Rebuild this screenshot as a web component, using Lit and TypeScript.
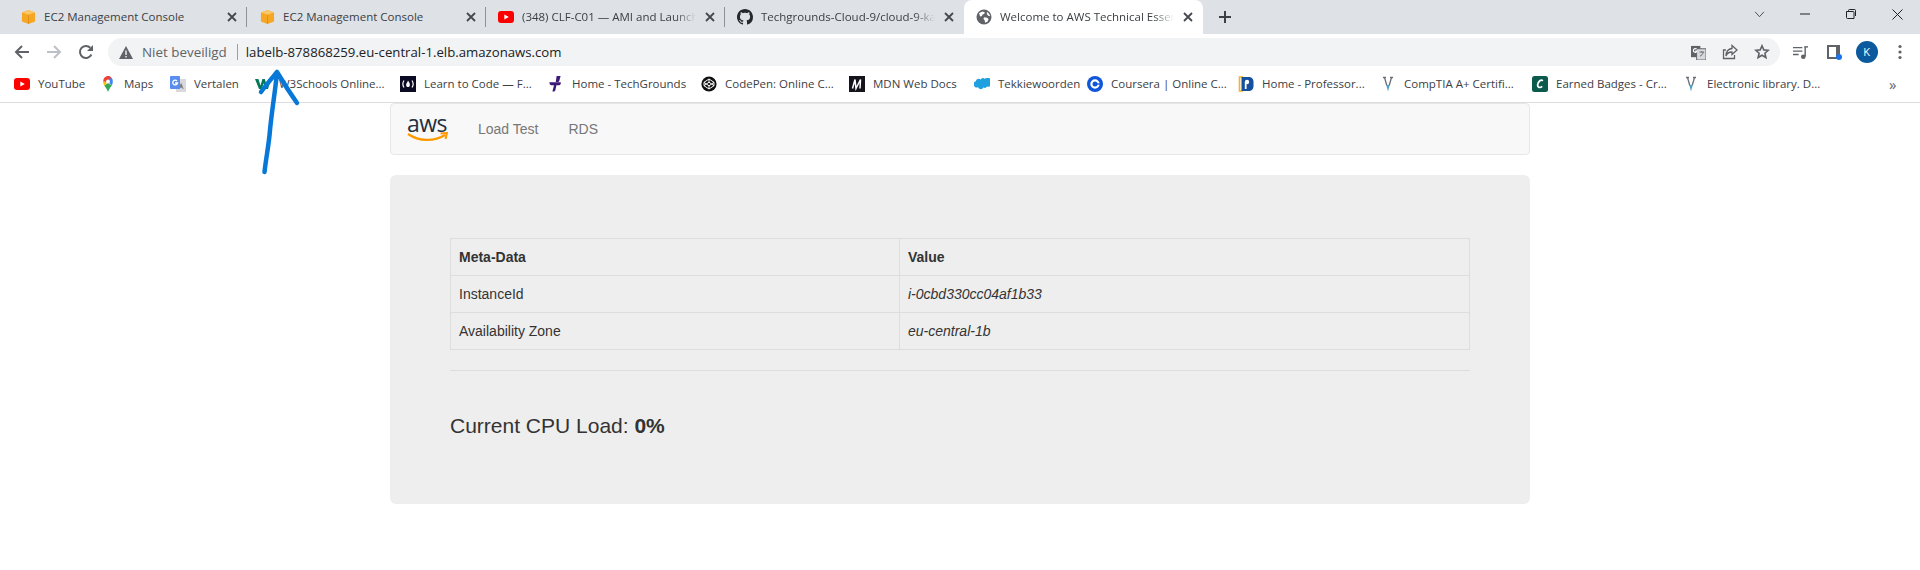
import {LitElement, html, css, svg} from 'lit';
import {customElement} from 'lit/decorators.js';

const cube = svg`<svg viewBox="0 0 16 16" width="15" height="16"><path fill="#f5a623" d="M8 .5 15 3.2v9.6L8 15.5 1 12.8V3.2z"/><path fill="#fbc766" d="M8 .5 15 3.2 8 5.6 1 3.2z"/><path fill="#d98a12" d="M7.6 5.6h.8v9.9h-.8z"/></svg>`;
const yt = svg`<svg viewBox="0 0 16 12" width="16" height="12"><rect width="16" height="12" rx="3" fill="#f00"/><path fill="#fff" d="M6.3 3.4v5.2L10.8 6z"/></svg>`;
const github = svg`<svg viewBox="0 0 16 16" width="16" height="16"><path fill="#24292f" d="M8 0C3.58 0 0 3.58 0 8c0 3.54 2.29 6.53 5.47 7.59.4.07.55-.17.55-.38 0-.19-.01-.82-.01-1.49-2.01.37-2.53-.49-2.69-.94-.09-.23-.48-.94-.82-1.13-.28-.15-.68-.52-.01-.53.63-.01 1.08.58 1.23.82.72 1.21 1.87.87 2.33.66.07-.52.28-.87.51-1.07-1.78-.2-3.64-.89-3.64-3.95 0-.87.31-1.59.82-2.15-.08-.2-.36-1.02.08-2.12 0 0 .67-.21 2.2.82.64-.18 1.32-.27 2-.27.68 0 1.36.09 2 .27 1.53-1.04 2.2-.82 2.2-.82.44 1.1.16 1.92.08 2.12.51.56.82 1.27.82 2.15 0 3.07-1.87 3.75-3.65 3.95.29.25.54.73.54 1.48 0 1.07-.01 1.93-.01 2.2 0 .21.15.46.55.38A8.013 8.013 0 0016 8c0-4.42-3.58-8-8-8z"/></svg>`;
const globe = svg`<svg viewBox="0 0 16 16" width="16" height="16"><circle cx="8" cy="8" r="7.5" fill="#5f6368"/><path fill="#fff" d="M3 4.2 6.2 2.4l2.6.8-.6 1.8-1.8.4-.4 1.6L4.2 7.4zM8.2 8.2l3 .6 1.4 1.4-1.2 2.6-2.2 1-.6-2.6-1.2-1.4zM11 2.8l2.4 2.4.8 2-2-.4-1.4-1.8z"/></svg>`;

const close = svg`<svg viewBox="0 0 10 10" width="10" height="10"><path stroke="#45484d" stroke-width="1.8" fill="none" d="M1 1l8 8M9 1l-8 8"/></svg>`;

const bookmarkIcons: Record<string, unknown> = {
  yt,
  maps: svg`<svg viewBox="0 0 16 16" width="16" height="16"><path fill="#34a853" d="M8 16C7 13 5.4 11.4 4.2 9.6L8 7l3.8 2.6C10.6 11.4 9 13 8 16z"/><path fill="#fbbc04" d="M3.2 5.4c0 1.6.4 2.6 1 4.2L8 6z"/><path fill="#4285f4" d="M8 0a4.9 4.9 0 0 1 4.8 5.4c0 1.6-.4 2.6-1 4.2L8 6z"/><path fill="#ea4335" d="M8 0C5.4 0 3.2 2.4 3.2 5.4L8 6l3-4.6C10.2.6 9.2 0 8 0z"/><circle cx="8" cy="5.4" r="1.9" fill="#fff"/></svg>`,
  translate: svg`<svg viewBox="0 0 16 16" width="16" height="16"><rect x="6" y="3" width="10" height="13" fill="#d9d9dd"/><path fill="#7b7f86" d="M10.6 7.5h1l2 5.5h-1l-.4-1.2h-2l-.4 1.2h-1z"/><rect width="10" height="13" rx="1" fill="#5a8df0"/><path fill="none" stroke="#fff" stroke-width="1.3" d="M7 5a2.4 2.4 0 1 0 .5 2H5"/></svg>`,
  w3: svg`<svg viewBox="0 0 16 16" width="16" height="16"><path fill="#04795a" d="M0 3h3.4L5.5 9.6 7.4 3h2.4l2 6.6L13.6 3H16l-3 10h-2.6L8.6 7.2 6.8 13H4z"/></svg>`,
  fcc: svg`<svg viewBox="0 0 16 16" width="16" height="16"><rect width="16" height="16" fill="#0a0a23"/><path fill="none" stroke="#fff" stroke-width="1.2" d="M4 4.5C2.6 6.6 2.6 9.4 4 11.5M12 4.5c1.4 2.1 1.4 4.9 0 7"/><path fill="#fff" d="M8 4.6c1 1.6 2.2 2.8 1.8 4.8-.2 1-1 1.6-1.8 1.6s-1.6-.6-1.8-1.6C5.8 7.6 7.4 6.8 8 4.6z"/></svg>`,
  tg: svg`<svg viewBox="0 0 16 16" width="16" height="16"><path fill="#3c1a78" d="M8.6 0h4l-1.2 4.4c-.3 1-1 1.6-2 1.6H7.8zM1.4 6.2h10.4c1 0 1.2.4 1 1.2-.3 1-1 1.8-2.2 1.8H8.4L7.4 14c-.2.9-1 1.6-2.2 1.6H4.4L6 9.2H3.4c-1.2 0-2-.9-2-3z"/></svg>`,
  codepen: svg`<svg viewBox="0 0 16 16" width="16" height="16"><circle cx="8" cy="8" r="7.6" fill="#111"/><path fill="none" stroke="#fff" stroke-width="1" d="M8 3 13 6.3v3.4L8 13 3 9.7V6.3zM8 3v3.2M8 13V9.8M3 6.3 8 9.8l5-3.5M3 9.7 8 6.2l5 3.5"/></svg>`,
  mdn: svg`<svg viewBox="0 0 16 16" width="16" height="16"><rect width="16" height="16" fill="#15141a"/><path fill="none" stroke="#fff" stroke-width="1.5" d="M3.500 12.500 6 3.500l1 9 4.500-9-.5 9"/></svg>`,
  sf: svg`<svg viewBox="0 0 16 12" width="16" height="12"><path fill="#1ea1de" d="M6.6 1.4A3 3 0 0 1 11 1a2.8 2.8 0 0 1 5 2.6 3 3 0 0 1-3 5 2.6 2.6 0 0 1-3.600 1 3 3 0 0 1-5.400-.3A2.600 2.600 0 0 1 1.800 3.200a3 3 0 0 1 4.800-1.800z"/></svg>`,
  coursera: svg`<svg viewBox="0 0 16 16" width="16" height="16"><circle cx="8" cy="8" r="8" fill="#0f56d9"/><circle cx="8" cy="8" r="3.600" fill="none" stroke="#fff" stroke-width="2.200"/><path fill="#0f56d9" d="M9.500 7.300h3.500v1.400H9.500z"/></svg>`,
  prof: svg`<svg viewBox="0 0 16 16" width="16" height="16"><path fill="none" stroke="#f4b22e" stroke-width="1.600" d="M5 1H1.500v14H5"/><path fill="#14509e" d="M3.500 1H11a4.500 4.500 0 0 1 4.500 4.500v5A4.500 4.500 0 0 1 11 15H3.500z"/><circle cx="9" cy="6" r="2.200" fill="#fff"/><rect x="6.800" y="6" width="1.800" height="7" fill="#fff"/></svg>`,
  v: svg`<svg viewBox="0 0 16 16" width="16" height="16"><path fill="none" stroke="#6b6f75" stroke-width="1.300" d="M3 1.500h3M10 1.500h3M4.500 1.500l2.300 8M11.500 1.500l-2.300 8"/><path fill="#4aa3c7" d="M6.300 9h3.400L8 15.500z"/></svg>`,
  credly: svg`<svg viewBox="0 0 16 16" width="16" height="16"><rect width="16" height="16" rx="2.500" fill="#0c5a4c"/><path fill="none" stroke="#fff" stroke-width="1.800" d="M10.800 4.800C9 3 5.800 5.600 5.600 9c-.1 2.600 2.400 3.200 4.600 1.400"/></svg>`,
};

const tabs = [
  {icon: cube, title: 'EC2 Management Console'},
  {icon: cube, title: 'EC2 Management Console'},
  {icon: yt, title: '(348) CLF-C01 — AMI and Launch', fade: true},
  {icon: github, title: 'Techgrounds-Cloud-9/cloud-9-ka', fade: true},
  {icon: globe, title: 'Welcome to AWS Technical Essen', fade: true, active: true},
];

// x of each bookmark, the width of an item is the distance to the next one
const bookmarks = [
  {x: 14, icon: 'yt', label: 'YouTube'},
  {x: 100, icon: 'maps', label: 'Maps'},
  {x: 170, icon: 'translate', label: 'Vertalen'},
  {x: 255, icon: 'w3', label: 'W3Schools Online...'},
  {x: 400, icon: 'fcc', label: 'Learn to Code — F...'},
  {x: 548, icon: 'tg', label: 'Home - TechGrounds'},
  {x: 701, icon: 'codepen', label: 'CodePen: Online C...'},
  {x: 849, icon: 'mdn', label: 'MDN Web Docs'},
  {x: 974, icon: 'sf', label: 'Tekkiewoorden'},
  {x: 1087, icon: 'coursera', label: 'Coursera | Online C...'},
  {x: 1238, icon: 'prof', label: 'Home - Professor...'},
  {x: 1380, icon: 'v', label: 'CompTIA A+ Certifi...'},
  {x: 1532, icon: 'credly', label: 'Earned Badges - Cr...'},
  {x: 1683, icon: 'v', label: 'Electronic library. D...'},
  {x: 1890, icon: '', label: ''},
];

@customElement('app-root')
export class AppRoot extends LitElement {
  static styles = css`
    :host {
      display: block;
      position: relative;
      width: 1920px;
      height: 570px;
      overflow: hidden;
      background: #fff;
      color: #333;
      font-family: 'Liberation Sans', Arial, sans-serif;
      font-size: 14px;
      line-height: 20px;
    }
    .chrome {
      font-family: 'Open Sans', sans-serif;
      color: #3c4043;
      font-size: 11.5px;
    }
    .tabstrip {
      display: flex;
      height: 34px;
      padding-left: 8px;
      background: #dee1e6;
    }
    .tab {
      position: relative;
      display: flex;
      align-items: center;
      flex: none;
      box-sizing: border-box;
      width: 239px;
      padding: 0 7px 0 12px;
    }
    .tab::after {
      content: '';
      position: absolute;
      right: 0;
      top: 7px;
      height: 20px;
      width: 1px;
      background: #8e9297;
    }
    .tab.active {
      background: #fff;
      border-radius: 8px 8px 0 0;
    }
    .tab.active::after {
      display: none;
    }
    .tab.before-active::after {
      display: none;
    }
    .fav {
      display: flex;
      align-items: center;
      justify-content: center;
      flex: none;
      width: 16px;
      height: 16px;
      margin-right: 8px;
    }
    .title {
      flex: 1;
      min-width: 0;
      white-space: nowrap;
    }
    .title.fade {
      -webkit-mask-image: linear-gradient(90deg, #000 88%, transparent 100%);
      mask-image: linear-gradient(90deg, #000 88%, transparent 100%);
      margin-right: 6px;
    }
    .tab-close {
      display: flex;
      align-items: center;
      justify-content: center;
      flex: none;
      width: 16px;
      height: 16px;
    }
    .new-tab {
      display: flex;
      align-items: center;
      justify-content: center;
      width: 44px;
    }
    .window {
      display: flex;
      margin-left: auto;
    }
    .window span {
      display: flex;
      align-items: center;
      justify-content: center;
      width: 46px;
      height: 28px;
    }
    .toolbar {
      display: flex;
      align-items: center;
      height: 28px;
      padding-top: 4px;
      background: #fff;
    }
    .nav-btn {
      display: flex;
      align-items: center;
      justify-content: center;
      flex: none;
      width: 32px;
      height: 28px;
    }
    .nav-btns {
      display: flex;
      padding-left: 6px;
      margin-right: 6px;
    }
    .omnibox {
      display: flex;
      align-items: center;
      box-sizing: border-box;
      flex: none;
      width: 1672px;
      height: 28px;
      padding: 0 2px 0 11px;
      border-radius: 14px;
      background: #f1f3f4;
      font-size: 13.4px;
    }
    .security {
      margin-left: 9px;
      color: #5f6368;
    }
    .divider {
      width: 1px;
      height: 16px;
      margin: 0 8px 0 10px;
      background: #9aa0a6;
    }
    .url {
      color: #202124;
      font-size: 13.2px;
    }
    .omni-end {
      display: flex;
      margin-left: auto;
    }
    .profile-area {
      display: flex;
      padding-left: 4px;
    }
    .profile-area .nav-btn {
      width: 33px;
    }
    .avatar {
      display: flex;
      align-items: center;
      justify-content: center;
      width: 22px;
      height: 22px;
      border-radius: 50%;
      background: #0b5a9e;
      color: #fff;
      font-size: 11px;
    }
    .bookmarks {
      display: flex;
      align-items: center;
      height: 36px;
      padding-left: 14px;
      background: #fff;
      border-bottom: 1px solid #dadce0;
    }
    .bookmark {
      display: flex;
      align-items: center;
      flex: none;
      white-space: nowrap;
    }
    .more {
      font-size: 15px;
      color: #5f6368;
      margin-left: -1px;
    }
    .page {
      box-sizing: border-box;
      width: 1170px;
      margin: 0 auto;
      padding: 0 15px;
    }
    .navbar {
      display: flex;
      align-items: center;
      box-sizing: border-box;
      height: 52px;
      margin-bottom: 20px;
      padding-left: 16px;
      background: #f8f8f8;
      border: 1px solid #e7e7e7;
      border-radius: 4px;
    }
    .logo {
      display: flex;
      flex-direction: column;
      width: 41px;
      margin-right: 30px;
    }
    .logo-text {
      font-family: 'Open Sans', sans-serif;
      font-size: 23px;
      line-height: 16px;
      height: 16px;
      color: #252f3e;
      letter-spacing: -0.5px;
    }
    .logo svg {
      display: block;
      margin-top: 1px;
    }
    .nav-link {
      color: #777;
      margin-right: 30px;
    }
    .jumbotron {
      box-sizing: border-box;
      height: 329px;
      padding: 63px 60px 0;
      background: #eee;
      border-radius: 6px;
    }
    table {
      width: 100%;
      border-collapse: collapse;
      table-layout: fixed;
    }
    th,
    td {
      box-sizing: border-box;
      padding: 8px;
      text-align: left;
      border: 1px solid #ddd;
    }
    th {
      font-weight: 700;
    }
    .first {
      width: 449px;
    }
    .value {
      font-style: italic;
    }
    hr {
      margin: 20px 0 0;
      border: 0;
      border-top: 1px solid #ddd;
    }
    .load {
      margin: 42px 0 0;
      font-size: 21px;
      line-height: 26px;
      font-weight: 400;
    }
    .arrow {
      position: absolute;
      left: 250px;
      top: 60px;
    }
  `;

  render() {
    return html`
      <div class="chrome">
        <div class="tabstrip">
          ${tabs.map((t, i) => html`
            <div class="tab ${t.active ? 'active' : ''} ${tabs[i + 1]?.active ? 'before-active' : ''}">
              <span class="fav">${t.icon}</span>
              <span class="title ${t.fade ? 'fade' : ''}">${t.title}</span>
              <span class="tab-close">${close}</span>
            </div>
          `)}
          <div class="new-tab">
            <svg viewBox="0 0 14 14" width="14" height="14"><path stroke="#3c4043" stroke-width="2" d="M7 1v12M1 7h12"/></svg>
          </div>
          <div class="window">
            <span><svg viewBox="0 0 12 8" width="11" height="7"><path fill="none" stroke="#3c4043" d="M1 1l5 5.500L11 1"/></svg></span>
            <span><svg viewBox="0 0 10 2" width="10" height="2"><path stroke="#202124" d="M0 1h10"/></svg></span>
            <span><svg viewBox="0 0 10 10" width="10" height="10"><path fill="none" stroke="#202124" d="M.5 2.500h6.500a1 1 0 0 1 1 1V9.500H1.500a1 1 0 0 1-1-1zM2.500 2.500V1.500a1 1 0 0 1 1-1h5a1 1 0 0 1 1 1V7"/></svg></span>
            <span><svg viewBox="0 0 11 11" width="11" height="11"><path stroke="#202124" d="M.5.5l10 10M10.500.5l-10 10"/></svg></span>
          </div>
        </div>
        <div class="toolbar">
          <div class="nav-btns">
            <span class="nav-btn"><svg viewBox="0 0 16 16" width="16" height="16"><path fill="none" stroke="#5f6368" stroke-width="2" d="M15 8H2M8 2 2 8l6 6"/></svg></span>
            <span class="nav-btn"><svg viewBox="0 0 16 16" width="16" height="16"><path fill="none" stroke="#bdc1c6" stroke-width="2" d="M1 8h13M8 2l6 6-6 6"/></svg></span>
            <span class="nav-btn"><svg viewBox="0 0 16 16" width="16" height="16"><path fill="none" stroke="#5f6368" stroke-width="2" d="M13.400 10.500A6 6 0 1 1 12.300 3.800"/><path fill="#5f6368" d="M15 1v6H9z"/></svg></span>
          </div>
          <div class="omnibox">
            <svg viewBox="0 0 14 13" width="14" height="13"><path fill="#5f6368" d="M7 0l7 13H0z"/><path fill="#f1f3f4" d="M6.300 4.500h1.400v4.500H6.300zM6.300 10h1.400v1.400H6.300z"/></svg>
            <span class="security">Niet beveiligd</span>
            <span class="divider"></span>
            <span class="url">labelb-878868259.eu-central-1.elb.amazonaws.com</span>
            <div class="omni-end">
              <span class="nav-btn"><svg viewBox="0 0 16 16" width="15" height="15"><rect width="10" height="12" y="1" fill="#5f6368"/><rect x="6" y="4" width="10" height="12" fill="#d7d9dc" stroke="#5f6368"/><path fill="none" stroke="#fff" stroke-width="1.200" d="M6 4.500a2 2 0 1 0 .4 2H4.500"/><path fill="none" stroke="#5f6368" d="M9 7.500h5M11.500 7v1M13 8c-.4 2-2 3-3.500 4"/></svg></span>
              <span class="nav-btn"><svg viewBox="0 0 16 16" width="16" height="16"><path fill="none" stroke="#5f6368" stroke-width="1.300" d="M4 6H1.500v8.500h11V11M10 1.500 15 6l-5 4.500V8C7 8 5 9 4 12c0-4 2-7 6-7.500z"/></svg></span>
              <span class="nav-btn"><svg viewBox="0 0 16 16" width="16" height="16"><path fill="none" stroke="#5f6368" stroke-width="1.600" d="M8 1.800l1.800 4.100 4.400.4-3.300 2.900 1 4.300L8 11.200l-3.900 2.300 1-4.300-3.300-2.900 4.400-.4z"/></svg></span>
            </div>
          </div>
          <div class="profile-area">
            <span class="nav-btn"><svg viewBox="0 0 16 16" width="15" height="15"><path stroke="#5f6368" stroke-width="1.500" d="M0 2.800h10M0 6.500h10M0 10.200h6"/><path fill="none" stroke="#5f6368" stroke-width="1.500" d="M13 2v10"/><path stroke="#5f6368" stroke-width="1.500" d="M12 2h4"/><circle cx="11" cy="12.500" r="2.500" fill="#5f6368"/></svg></span>
            <span class="nav-btn"><svg viewBox="0 0 16 16" width="16" height="16"><path fill="#5f6368" d="M1 1h13v14H1z"/><path fill="#fff" d="M3 3h7v10H3z"/><circle cx="13" cy="13" r="3" fill="#1a73e8"/></svg></span>
            <span class="nav-btn"><span class="avatar">K</span></span>
            <span class="nav-btn"><svg viewBox="0 0 4 16" width="4" height="16"><circle cx="2" cy="2.500" r="1.600" fill="#5f6368"/><circle cx="2" cy="8" r="1.600" fill="#5f6368"/><circle cx="2" cy="13.500" r="1.600" fill="#5f6368"/></svg></span>
          </div>
        </div>
        <div class="bookmarks">
          ${bookmarks.slice(0, -1).map((b, i) => html`
            <div class="bookmark" style="width:${bookmarks[i + 1].x - b.x}px">
              <span class="fav">${bookmarkIcons[b.icon]}</span>${b.label}
            </div>
          `)}
          <span class="more">»</span>
        </div>
      </div>
      <div class="page">
        <div class="navbar">
          <div class="logo">
            <span class="logo-text">aws</span>
            <svg viewBox="0 0 41 11" width="41" height="11"><path fill="none" stroke="#f90" stroke-width="2.200" d="M1 2c11 7.500 26 8 37 1"/><path fill="none" stroke="#f90" stroke-width="2" d="M33.500 1.500 40 1l-1.500 6"/></svg>
          </div>
          <span class="nav-link">Load Test</span>
          <span class="nav-link">RDS</span>
        </div>
        <div class="jumbotron">
          <table>
            <tr><th class="first">Meta-Data</th><th>Value</th></tr>
            <tr><td>InstanceId</td><td class="value">i-0cbd330cc04af1b33</td></tr>
            <tr><td>Availability Zone</td><td class="value">eu-central-1b</td></tr>
          </table>
          <hr />
          <h3 class="load">Current CPU Load: <b>0%</b></h3>
        </div>
      </div>
      <svg class="arrow" viewBox="0 0 60 120" width="60" height="120">
        <path fill="none" stroke="#0878d8" stroke-width="4.500" stroke-linecap="round" stroke-linejoin="round"
          d="M14.500 112C16 98 19 84 20 70 22 50 25 32 27 13M11 32C16 25 22 18 27 12 33 22 40 33 47 43"/>
      </svg>
    `;
  }
}
